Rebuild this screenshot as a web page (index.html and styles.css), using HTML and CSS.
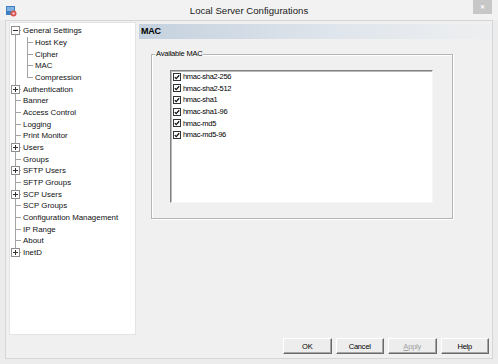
FILE: index.html
```html
<!DOCTYPE html>
<html lang="en">
<head>
   <meta charset="UTF-8">
   <title>Local Server Configurations</title>
   <link rel="stylesheet" href="styles.css">
</head>
<body>
   <div class="window">
       <div class="titlebar">
           <div class="title-left">
               <svg class="app-icon" width="11" height="11" viewBox="0 0 11 11">
                   <rect x="0" y="0" width="9" height="9" fill="#3f7fbf"/>
                   <rect x="1" y="1" width="7" height="4" fill="#7fb2e0"/>
                   <circle cx="7.5" cy="7.5" r="3" fill="#d9534f"/>
                   <circle cx="7.5" cy="7.5" r="1.2" fill="#f4c2c0"/>
               </svg>
           </div>
           <div class="title">Local Server Configurations</div>
           <div class="title-right">
               <div class="close-btn">&#x2715;</div>
           </div>
       </div>

       <div class="client">
           <div class="tree">
               <div class="row"><span class="cell first"><svg class="exp" width="9" height="9" viewBox="0 0 9 9"><rect x="0.5" y="0.5" width="8" height="8" fill="#fff" stroke="#8e8e8e"/><path d="M2 4.5h5" stroke="#333"/></svg></span><span class="label">General Settings</span></div>
               <div class="row"><span class="cell pipe"></span><span class="cell tee"></span><span class="label">Host Key</span></div>
               <div class="row"><span class="cell pipe"></span><span class="cell tee"></span><span class="label">Cipher</span></div>
               <div class="row"><span class="cell pipe"></span><span class="cell tee"></span><span class="label">MAC</span></div>
               <div class="row"><span class="cell pipe"></span><span class="cell corner"></span><span class="label">Compression</span></div>
               <div class="row"><span class="cell tee"><svg class="exp" width="9" height="9" viewBox="0 0 9 9"><rect x="0.5" y="0.5" width="8" height="8" fill="#fff" stroke="#8e8e8e"/><path d="M2 4.5h5M4.5 2v5" stroke="#333"/></svg></span><span class="label">Authentication</span></div>
               <div class="row"><span class="cell tee"></span><span class="label">Banner</span></div>
               <div class="row"><span class="cell tee"></span><span class="label">Access Control</span></div>
               <div class="row"><span class="cell tee"></span><span class="label">Logging</span></div>
               <div class="row"><span class="cell tee"></span><span class="label">Print Monitor</span></div>
               <div class="row"><span class="cell tee"><svg class="exp" width="9" height="9" viewBox="0 0 9 9"><rect x="0.5" y="0.5" width="8" height="8" fill="#fff" stroke="#8e8e8e"/><path d="M2 4.5h5M4.5 2v5" stroke="#333"/></svg></span><span class="label">Users</span></div>
               <div class="row"><span class="cell tee"></span><span class="label">Groups</span></div>
               <div class="row"><span class="cell tee"><svg class="exp" width="9" height="9" viewBox="0 0 9 9"><rect x="0.5" y="0.5" width="8" height="8" fill="#fff" stroke="#8e8e8e"/><path d="M2 4.5h5M4.5 2v5" stroke="#333"/></svg></span><span class="label">SFTP Users</span></div>
               <div class="row"><span class="cell tee"></span><span class="label">SFTP Groups</span></div>
               <div class="row"><span class="cell tee"><svg class="exp" width="9" height="9" viewBox="0 0 9 9"><rect x="0.5" y="0.5" width="8" height="8" fill="#fff" stroke="#8e8e8e"/><path d="M2 4.5h5M4.5 2v5" stroke="#333"/></svg></span><span class="label">SCP Users</span></div>
               <div class="row"><span class="cell tee"></span><span class="label">SCP Groups</span></div>
               <div class="row"><span class="cell tee"></span><span class="label">Configuration Management</span></div>
               <div class="row"><span class="cell tee"></span><span class="label">IP Range</span></div>
               <div class="row"><span class="cell tee"></span><span class="label">About</span></div>
               <div class="row"><span class="cell corner"><svg class="exp" width="9" height="9" viewBox="0 0 9 9"><rect x="0.5" y="0.5" width="8" height="8" fill="#fff" stroke="#8e8e8e"/><path d="M2 4.5h5M4.5 2v5" stroke="#333"/></svg></span><span class="label">InetD</span></div>
           </div>

           <div class="content">
               <div class="page-header">MAC</div>
               <div class="page-body">
                   <fieldset class="group">
                       <legend>Available MAC</legend>
                       <div class="listbox" id="mac-list"></div>
                   </fieldset>
               </div>
               <div class="buttons">
                   <button class="btn">OK</button>
                   <button class="btn">Cancel</button>
                   <button class="btn disabled"><u>A</u>pply</button>
                   <button class="btn">Help</button>
               </div>
           </div>
       </div>
   </div>

   <script>
       const macList = document.getElementById('mac-list');
       const macs = ['hmac-sha2-256', 'hmac-sha2-512', 'hmac-sha1', 'hmac-sha1-96', 'hmac-md5', 'hmac-md5-96'];

       macs.forEach(name => {
           const item = document.createElement('div');
           item.classList.add('check-item');
           item.innerHTML = `<svg class="check" width="8" height="8" viewBox="0 0 8 8">
               <rect x="0.5" y="0.5" width="7" height="7" fill="#fff" stroke="#333"/>
               <path d="M1.8 4.1l1.4 1.5l3-3.4" fill="none" stroke="#111" stroke-width="1.3"/>
           </svg><span>${name}</span>`;
           macList.appendChild(item);
       });
   </script>
</body>
</html>
```

FILE: styles.css
```css
body {
    margin: 0;
    font-family: 'Liberation Sans', Arial, sans-serif;
    color: #000;
    overflow: hidden;
}

.window {
    width: 498px;
    height: 364px;
    display: flex;
    flex-direction: column;
    background-color: #ececec;
}

.titlebar {
    height: 20px;
    display: grid;
    grid-template-columns: 1fr auto 1fr;
    background-color: #f2f2f2;
}

.app-icon {
    display: block;
    margin: 6px 0 0 6px;
}

.title {
    font-size: 9.6px;
    line-height: 21px;
    color: #222;
}

.title-right {
    display: flex;
    justify-content: flex-end;
}

.close-btn {
    width: 19px;
    height: 14px;
    margin-right: 6px;
    background-color: #c7c7c7;
    color: #fff;
    font-size: 6px;
    font-weight: bold;
    line-height: 14px;
    text-align: center;
}

.client {
    height: 339px;
    margin: 0 5px 5px 5px;
    box-sizing: border-box;
    border: 1px solid #d6d6d6;
    background-color: #f0f0f0;
    display: flex;
}

.tree {
    width: 127px;
    height: 313px;
    margin: 1px 0 0 3px;
    box-sizing: border-box;
    padding-top: 2px;
    border: 1px solid #e4e4e4;
    background-color: #fff;
    font-size: 7.9px;
    color: #111;
}

.row {
    display: flex;
    align-items: center;
    height: 11.68px;
}

.cell {
    width: 12px;
    height: 100%;
    flex: none;
    display: flex;
    align-items: center;
    --line: #a3a3a3;
}

.cell.pipe {
    background: linear-gradient(var(--line), var(--line)) 5px 0 / 1px 100% no-repeat;
}

.cell.tee {
    background:
        linear-gradient(var(--line), var(--line)) 5px 0 / 1px 100% no-repeat,
        linear-gradient(var(--line), var(--line)) 5px 50% / 6px 1px no-repeat;
}

.cell.corner {
    background:
        linear-gradient(var(--line), var(--line)) 5px 0 / 1px 50% no-repeat,
        linear-gradient(var(--line), var(--line)) 5px 50% / 6px 1px no-repeat;
}

.cell.first {
    background:
        linear-gradient(var(--line), var(--line)) 5px 100% / 1px 50% no-repeat,
        linear-gradient(var(--line), var(--line)) 5px 50% / 6px 1px no-repeat;
}

.exp {
    display: block;
    margin-left: 1px;
}

.label {
    margin-left: 1px;
    white-space: nowrap;
}

.content {
    flex: 1;
    margin-left: 3px;
    display: flex;
    flex-direction: column;
}

.page-header {
    height: 15px;
    margin-top: 3px;
    padding-left: 2px;
    background: linear-gradient(to right, #c4d1de, #dfe5ec 55%, #eeeff0);
    font-size: 9px;
    font-weight: bold;
    letter-spacing: -0.3px;
    line-height: 15px;
}

.page-body {
    flex: 1;
}

.group {
    width: 302px;
    box-sizing: border-box;
    margin: 10px 0 0 12px;
    padding: 11px 0 15px 18px;
    min-inline-size: 0;
    border: 1px solid #b5b5b5;
    box-shadow: inset 1px 1px #fff, 1px 1px #fff;
}

.group legend {
    margin-left: -15px;
    padding: 0 1px;
    font-size: 7.5px;
    line-height: 10px;
    letter-spacing: -0.2px;
}

.listbox {
    width: 263px;
    height: 133px;
    box-sizing: border-box;
    padding: 0 0 0 2px;
    background-color: #fff;
    border: 1px solid;
    border-color: #828282 #f7f7f7 #f7f7f7 #828282;
    box-shadow: inset 1px 1px #b9b9b9;
}

.check-item {
    display: flex;
    align-items: center;
    gap: 2px;
    height: 11.6px;
    font-size: 7.5px;
    letter-spacing: -0.3px;
}

.check {
    display: block;
    flex: none;
}

.buttons {
    display: flex;
    justify-content: flex-end;
    gap: 4px;
    margin: 0 3px 4px 0;
}

.btn {
    width: 48.5px;
    height: 16px;
    padding: 0;
    font-family: inherit;
    font-size: 7.5px;
    letter-spacing: -0.2px;
    color: #000;
    background-color: #ededed;
    border: 1px solid;
    border-color: #fff #6a6a6a #6a6a6a #fff;
    box-shadow: inset -1px -1px #a5a5a5;
}

.btn.disabled {
    color: #a3a3a3;
}
```
